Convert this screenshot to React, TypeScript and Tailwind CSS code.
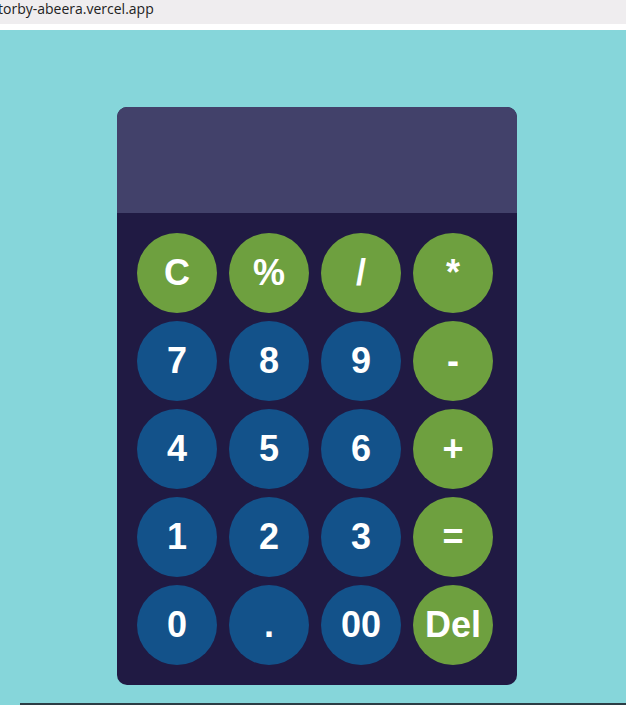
const keys: { label: string; kind: 'op' | 'num' }[] = [
  { label: 'C', kind: 'op' },
  { label: '%', kind: 'op' },
  { label: '/', kind: 'op' },
  { label: '*', kind: 'op' },
  { label: '7', kind: 'num' },
  { label: '8', kind: 'num' },
  { label: '9', kind: 'num' },
  { label: '-', kind: 'op' },
  { label: '4', kind: 'num' },
  { label: '5', kind: 'num' },
  { label: '6', kind: 'num' },
  { label: '+', kind: 'op' },
  { label: '1', kind: 'num' },
  { label: '2', kind: 'num' },
  { label: '3', kind: 'num' },
  { label: '=', kind: 'op' },
  { label: '0', kind: 'num' },
  { label: '.', kind: 'num' },
  { label: '00', kind: 'num' },
  { label: 'Del', kind: 'op' },
];

export default function App() {
  return (
    <div className="w-[626px] h-[705px] flex flex-col bg-[#86d6da] overflow-hidden">
      {/* browser address strip */}
      <div className="h-[24px] bg-[#efedef] flex items-center text-[14px] leading-none text-[#222] font-['Open_Sans',sans-serif] -ml-[2px] pb-[6px]">
        torby-abeera.vercel.app
      </div>
      <div className="h-[6px] bg-white" />

      <div className="flex-1 pt-[77px] pl-[117px]">
        <div className="w-[400px] rounded-[10px] overflow-hidden bg-[#201a43]">
          <div className="h-[106px] bg-[#42416a]" />
          <div className="grid grid-cols-4 gap-x-[12px] gap-y-[8px] pt-[20px] pb-[20px] pl-[20px] pr-[24px]">
            {keys.map((k) => (
              <button
                key={k.label}
                className={`w-[80px] h-[80px] rounded-full flex items-center justify-center text-white font-bold text-[36px] font-['Liberation_Sans',Arial,sans-serif] ${
                  k.kind === 'op' ? 'bg-[#6ea03f]' : 'bg-[#13528a]'
                }`}
              >
                {k.label}
              </button>
            ))}
          </div>
        </div>
      </div>
      <div className="h-[2px] ml-[20px] bg-[#2b3d45]" />
    </div>
  );
}
